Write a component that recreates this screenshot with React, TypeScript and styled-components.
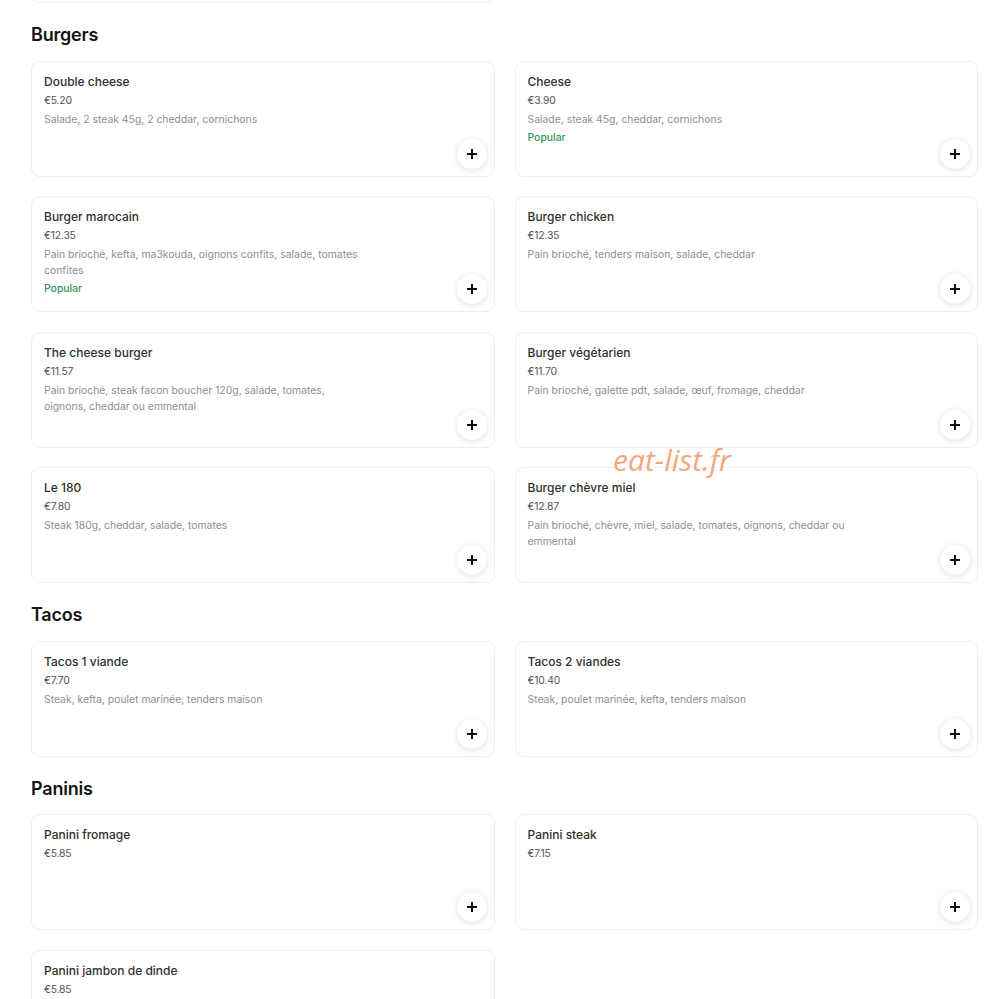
import React from "react";
import styled, { createGlobalStyle } from "styled-components";

const GlobalStyle = createGlobalStyle`
  html, body {
    margin: 0;
    padding: 0;
    background: #ffffff;
  }
  body {
    font-family: Inter, "Noto Sans", "Liberation Sans", sans-serif;
    color: #222;
    overflow: hidden;
  }
`;

type Item = {
  name: string;
  price: string;
  desc?: string;
  popular?: boolean;
};

type Section = {
  title: string;
  items: Item[];
};

const sections: Section[] = [
  {
    title: "Burgers",
    items: [
      { name: "Double cheese", price: "€5.20", desc: "Salade, 2 steak 45g, 2 cheddar, cornichons" },
      { name: "Cheese", price: "€3.90", desc: "Salade, steak 45g, cheddar, cornichons", popular: true },
      {
        name: "Burger marocain",
        price: "€12.35",
        desc: "Pain brioché, kefta, ma3kouda, oignons confits, salade, tomates confites",
        popular: true,
      },
      { name: "Burger chicken", price: "€12.35", desc: "Pain brioché, tenders maison, salade, cheddar" },
      {
        name: "The cheese burger",
        price: "€11.57",
        desc: "Pain brioché, steak facon boucher 120g, salade, tomates, oignons, cheddar ou emmental",
      },
      { name: "Burger végétarien", price: "€11.70", desc: "Pain brioché, galette pdt, salade, œuf, fromage, cheddar" },
      { name: "Le 180", price: "€7.80", desc: "Steak 180g, cheddar, salade, tomates" },
      {
        name: "Burger chèvre miel",
        price: "€12.87",
        desc: "Pain brioché, chèvre, miel, salade, tomates, oignons, cheddar ou emmental",
      },
    ],
  },
  {
    title: "Tacos",
    items: [
      { name: "Tacos 1 viande", price: "€7.70", desc: "Steak, kefta, poulet marinée, tenders maison" },
      { name: "Tacos 2 viandes", price: "€10.40", desc: "Steak, poulet marinée, kefta, tenders maison" },
    ],
  },
  {
    title: "Paninis",
    items: [
      { name: "Panini fromage", price: "€5.85" },
      { name: "Panini steak", price: "€7.15" },
      { name: "Panini jambon de dinde", price: "€5.85" },
    ],
  },
];

const Page = styled.div`
  position: relative;
  display: flow-root;
  padding: 0 11px 40px 31px;
`;

/* The list is scrolled: the previous section's last card sits above the fold */
const Scrolled = styled.div`
  margin-top: -113px;
`;

const SectionBlock = styled.section`
  margin-top: 20px;
  &:first-child {
    margin-top: 0;
  }
`;

const Heading = styled.h2`
  margin: 0 0 13.5px;
  font-size: 18px;
  line-height: 24px;
  font-weight: 600;
  color: #141414;
  letter-spacing: -0.2px;
`;

const Grid = styled.div`
  display: grid;
  grid-template-columns: 1fr 1fr;
  column-gap: 20px;
  row-gap: 19.5px;
`;

const Card = styled.div`
  box-sizing: border-box;
  height: 116px;
  display: flex;
  justify-content: space-between;
  padding: 10px 7px 7px 12px;
  border: 1px solid #efefef;
  border-radius: 9px;
  background: #fff;
`;

const Info = styled.div`
  display: flex;
  flex-direction: column;
  min-width: 0;
`;

const Name = styled.div`
  font-size: 12px;
  line-height: 20px;
  font-weight: 500;
  color: #303030;
`;

const Price = styled.div`
  margin-top: 1px;
  font-size: 10.4px;
  line-height: 16px;
  color: #545454;
  letter-spacing: -0.2px;
`;

const Desc = styled.div`
  margin-top: 3px;
  max-width: 321px;
  font-size: 10.4px;
  line-height: 16px;
  color: #8e8e8e;
`;

const Popular = styled.div`
  margin-top: 2px;
  font-size: 10.4px;
  line-height: 16px;
  font-weight: 500;
  color: #2f9558;
`;

const AddButton = styled.button`
  flex: none;
  align-self: flex-end;
  width: 30px;
  height: 30px;
  border: none;
  border-radius: 50%;
  background: #fff;
  box-shadow: 0 1px 6px rgba(0, 0, 0, 0.13);
  display: flex;
  align-items: center;
  justify-content: center;
  padding: 0;
  color: #111;
  cursor: pointer;
`;

const Watermark = styled.div`
  position: absolute;
  left: 613px;
  top: 442px;
  font-family: "Open Sans", "Noto Sans", sans-serif;
  font-style: italic;
  font-weight: 400;
  font-size: 30px;
  line-height: 36px;
  color: #f3a77d;
  pointer-events: none;
`;

const PlusIcon = () => (
  <svg width="12" height="12" viewBox="0 0 12 12" aria-hidden="true">
    <path d="M6 1v10M1 6h10" stroke="currentColor" strokeWidth="2" fill="none" />
  </svg>
);

const MenuCard = ({ item }: { item?: Item }) => (
  <Card>
    <Info>
      {item && (
        <>
          <Name>{item.name}</Name>
          <Price>{item.price}</Price>
          {item.desc && <Desc>{item.desc}</Desc>}
          {item.popular && <Popular>Popular</Popular>}
        </>
      )}
    </Info>
    <AddButton aria-label="Ajouter">
      <PlusIcon />
    </AddButton>
  </Card>
);

export default function App() {
  return (
    <>
      <GlobalStyle />
      <Page>
        <Scrolled>
          <SectionBlock>
            <Grid>
              <MenuCard />
            </Grid>
          </SectionBlock>
          {sections.map((s) => (
            <SectionBlock key={s.title}>
              <Heading>{s.title}</Heading>
              <Grid>
                {s.items.map((it) => (
                  <MenuCard key={it.name} item={it} />
                ))}
              </Grid>
            </SectionBlock>
          ))}
        </Scrolled>
        <Watermark>eat-list.fr</Watermark>
      </Page>
    </>
  );
}
